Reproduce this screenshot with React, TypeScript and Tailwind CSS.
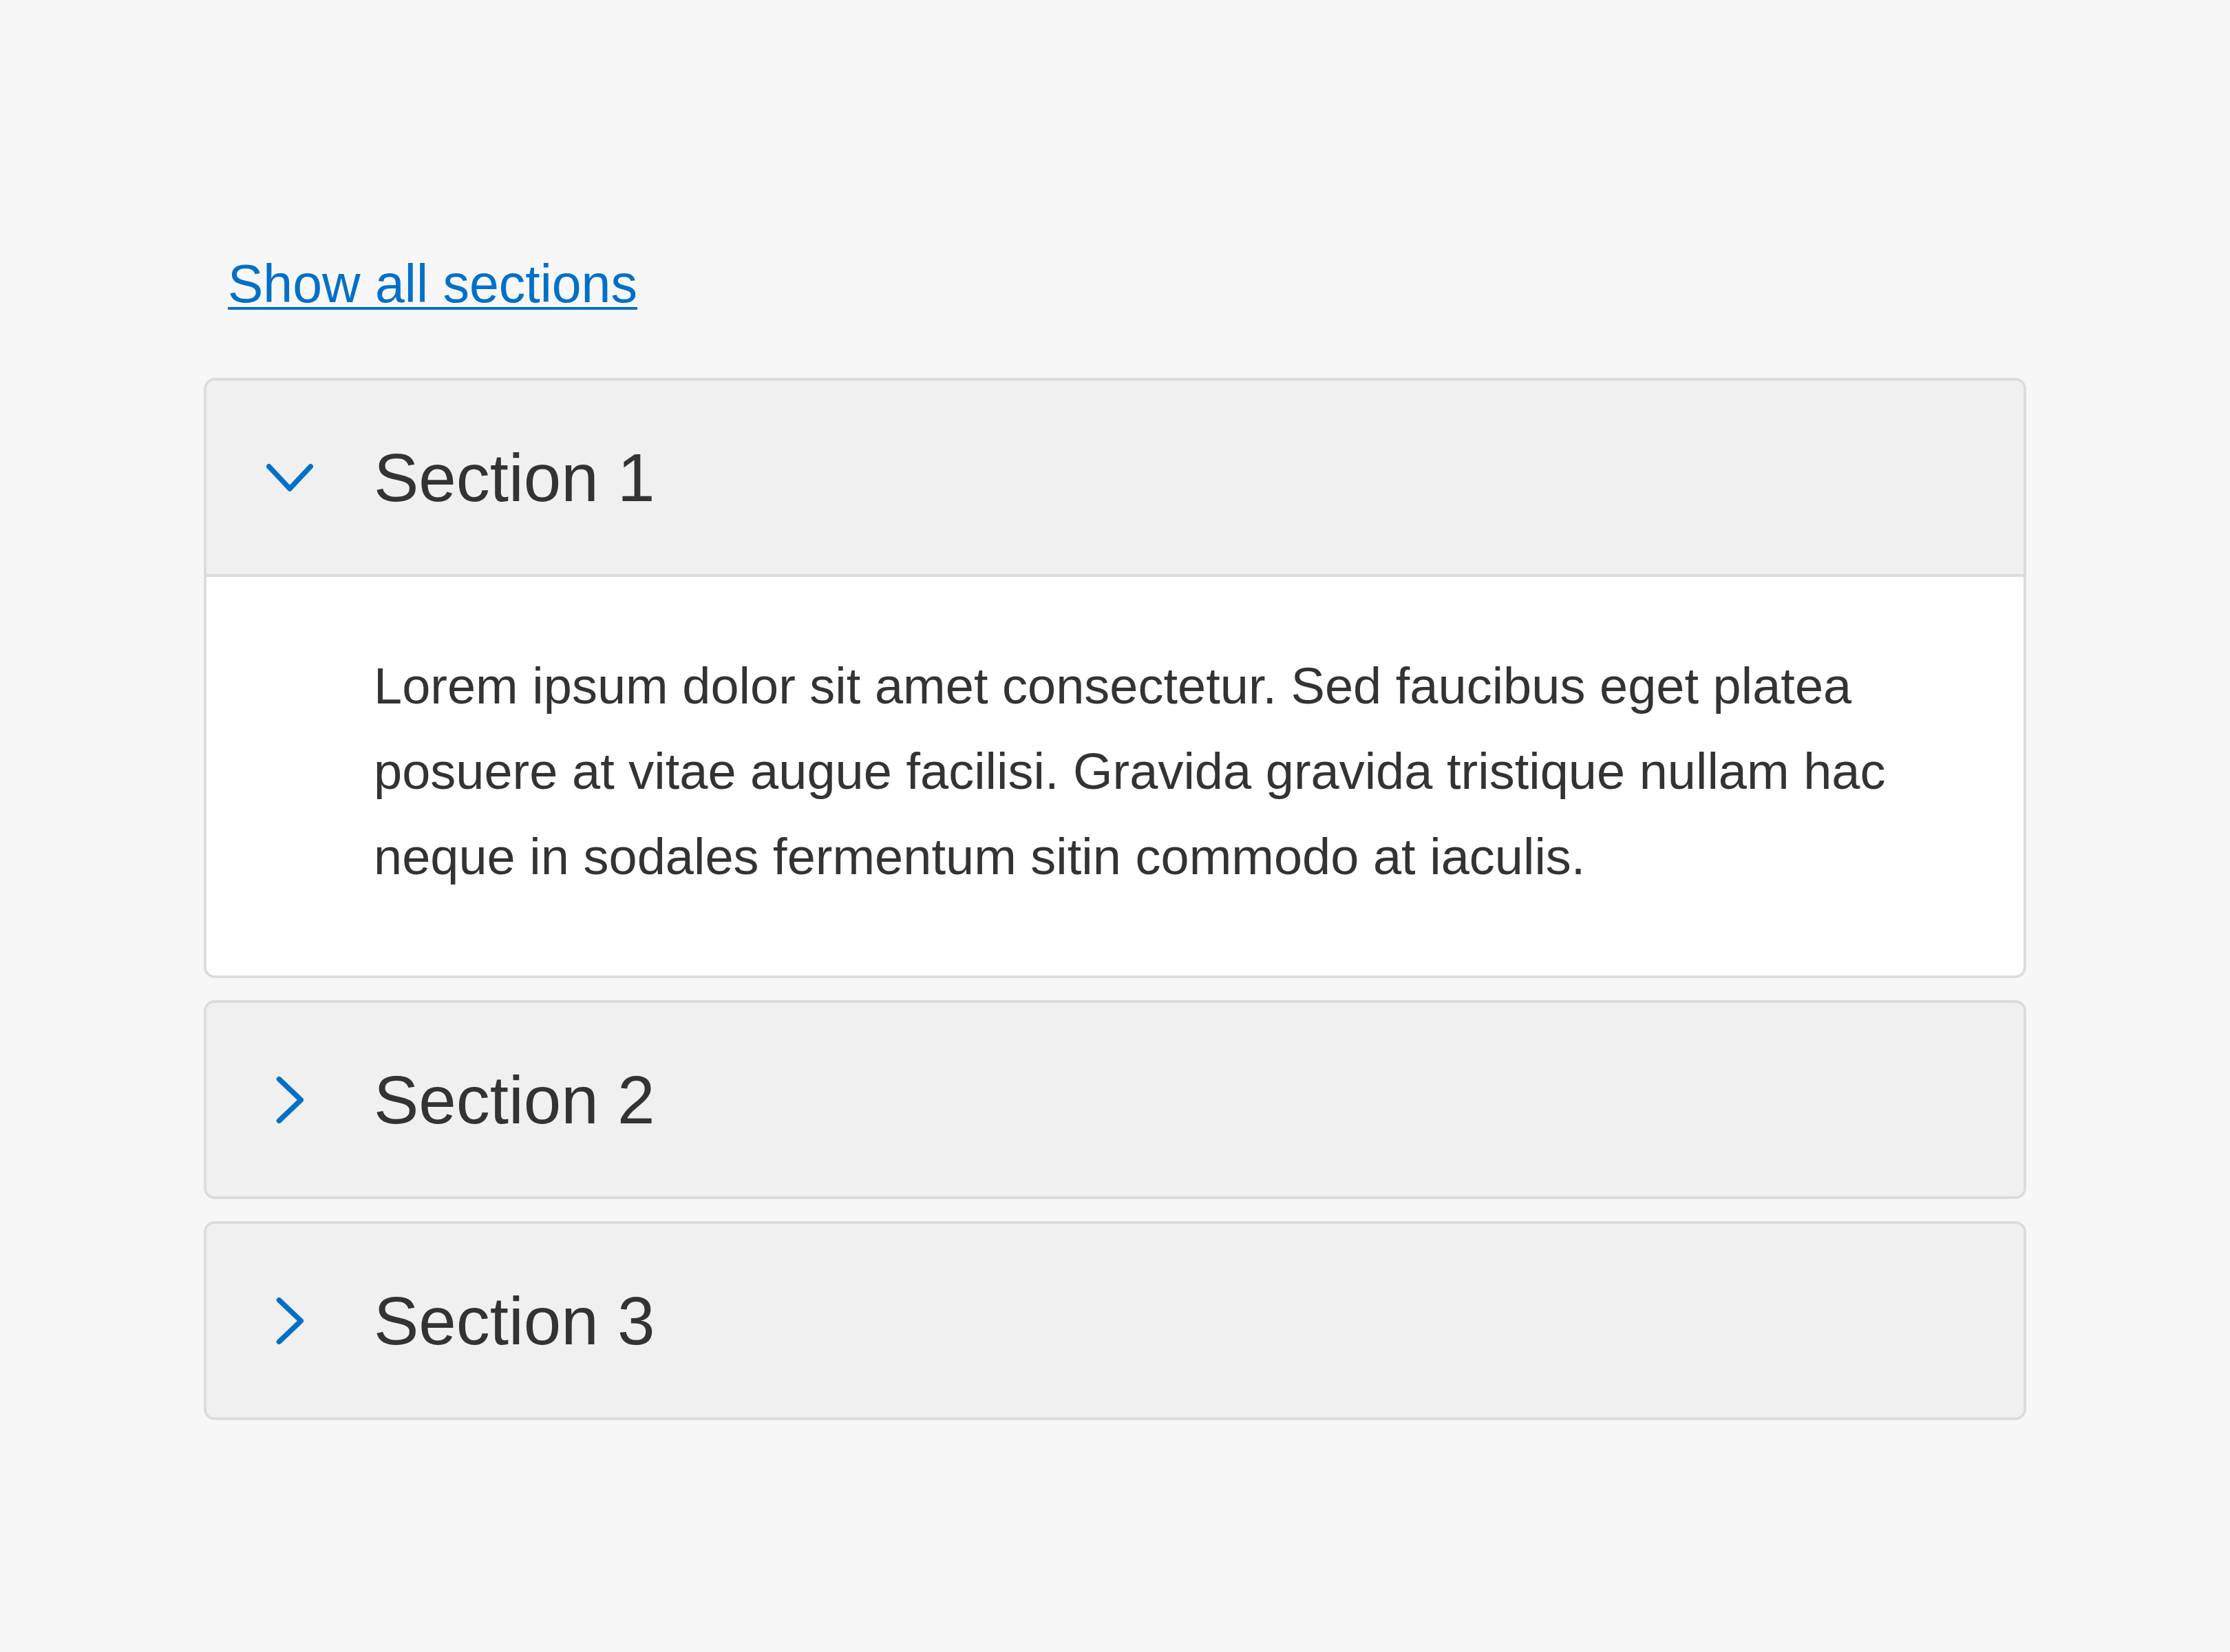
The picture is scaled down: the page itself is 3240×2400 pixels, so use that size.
import { useState } from "react";

const sections = [
  {
    title: "Section 1",
    body: "Lorem ipsum dolor sit amet consectetur. Sed faucibus eget platea posuere at vitae augue facilisi. Gravida gravida tristique nullam hac neque in sodales fermentum sitin commodo at iaculis.",
  },
  {
    title: "Section 2",
    body: "Lorem ipsum dolor sit amet consectetur. Sed faucibus eget platea posuere at vitae augue facilisi.",
  },
  {
    title: "Section 3",
    body: "Lorem ipsum dolor sit amet consectetur. Sed faucibus eget platea posuere at vitae augue facilisi.",
  },
];

function Chevron({ open }: { open: boolean }) {
  return (
    <svg
      viewBox="0 0 68 68"
      className="w-[68px] h-[68px] shrink-0"
      fill="none"
      stroke="#0070c9"
      strokeWidth={7.5}
      strokeLinecap="round"
      strokeLinejoin="round"
    >
      {open ? (
        <path d="M3.75 17.75L34 50L64.25 17.75" />
      ) : (
        <path d="M18.5 3.75L50.25 34L18.5 64.25" />
      )}
    </svg>
  );
}

export default function App() {
  const [open, setOpen] = useState<number[]>([0]);
  const allOpen = open.length === sections.length;

  const toggle = (i: number) =>
    setOpen((prev) => (prev.includes(i) ? prev.filter((x) => x !== i) : [...prev, i]));

  return (
    <div className="min-h-screen w-full bg-[#f7f7f7] font-['Liberation_Sans',Arial,sans-serif]">
      <div className="px-[296px] pt-[366px] pb-[200px]">
        {/* toggle all */}
        <button
          type="button"
          onClick={() => setOpen(allOpen ? [] : sections.map((_, i) => i))}
          className="ml-[35px] mb-[91px] block text-[77px] leading-[92px] text-[#0070c9] underline decoration-4 underline-offset-[7px]"
        >
          {allOpen ? "Hide all sections" : "Show all sections"}
        </button>

        <div className="flex flex-col gap-8">
          {sections.map((s, i) => {
            const isOpen = open.includes(i);
            return (
              <div
                key={s.title}
                className="border-4 border-[#dcdcdc] rounded-[16px] overflow-hidden bg-white"
              >
                <button
                  type="button"
                  aria-expanded={isOpen}
                  onClick={() => toggle(i)}
                  className="flex w-full h-[281px] items-center gap-[88px] pl-[87px] bg-[#f0f0f0] text-left"
                >
                  <Chevron open={isOpen} />
                  <span className="text-[98px] leading-[118px] text-[#333333]">{s.title}</span>
                </button>
                {isOpen && (
                  <div className="border-t-4 border-[#dcdcdc] pt-[97px] pb-[110px] pl-[243px] pr-[120px]">
                    <p className="text-[74px] leading-[124px] text-[#333333]">{s.body}</p>
                  </div>
                )}
              </div>
            );
          })}
        </div>
      </div>
    </div>
  );
}
